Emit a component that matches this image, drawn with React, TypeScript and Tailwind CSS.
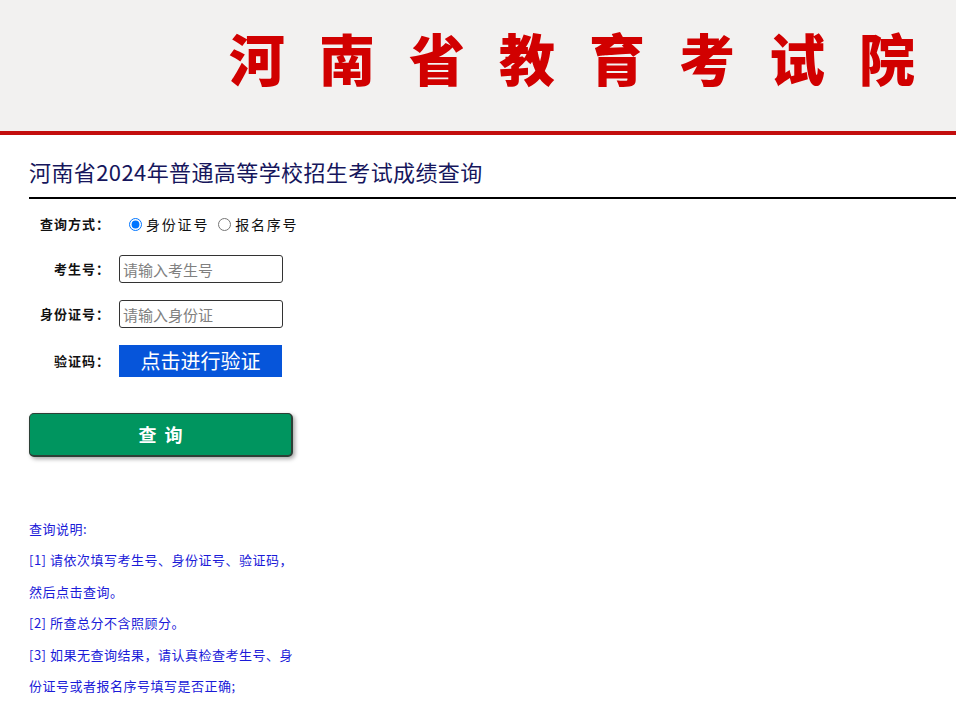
import React from "react";

const cjk = { fontFamily: '"Noto Sans CJK SC", "Liberation Sans", sans-serif' };

const notes = [
  "查询说明:",
  "[1] 请依次填写考生号、身份证号、验证码，",
  "然后点击查询。",
  "[2] 所查总分不含照顾分。",
  "[3] 如果无查询结果，请认真检查考生号、身",
  "份证号或者报名序号填写是否正确;",
];

function Label({ children }: { children: React.ReactNode }) {
  return (
    <div className="w-[84px] shrink-0 text-right text-[13px] font-bold tracking-[1px] text-[#111]">
      {children}
    </div>
  );
}

export default function App() {
  return (
    <div className="min-h-[716px] bg-white" style={cjk}>
      {/* banner */}
      <div className="h-[131px] bg-[#f2f1f0] pl-[229px] pt-[29px]">
        <div className="text-[56px] leading-[56px] font-black tracking-[34px] text-[#d10000] whitespace-nowrap">
          河南省教育考试院
        </div>
      </div>
      <div className="h-[4px] bg-[#c30d0d]" />

      {/* title */}
      <div className="pl-[29px] pt-[21px]">
        <h1 className="text-[22px] leading-[30px] tracking-[0.4px] text-[#16165c] whitespace-nowrap">
          河南省2024年普通高等学校招生考试成绩查询
        </h1>
      </div>
      <div className="ml-[29px] mt-[11px] h-[2px] bg-black" />

      {/* form */}
      <div className="pl-[26px] pt-[12px]">
        <div className="flex items-center h-[26px] gap-[9px]">
          <Label>查询方式：</Label>
          <div className="flex items-center text-[14px] tracking-[1.8px] text-[#111] pl-[10px]">
            <input type="radio" name="mode" defaultChecked className="m-0 mr-[4px] h-[13px] w-[13px]" />
            <span>身份证号</span>
            <input type="radio" name="mode" className="m-0 ml-[9px] mr-[4px] h-[13px] w-[13px]" />
            <span>报名序号</span>
          </div>
        </div>

        <div className="flex items-center mt-[18px] gap-[9px]">
          <Label>考生号：</Label>
          <input
            placeholder="请输入考生号"
            className="w-[164px] h-[28px] border border-[#333] rounded-[3px] pl-[3px] text-[15px] placeholder:text-[#808080] outline-none"
          />
        </div>

        <div className="flex items-center mt-[17px] gap-[9px]">
          <Label>身份证号：</Label>
          <input
            placeholder="请输入身份证"
            className="w-[164px] h-[28px] border border-[#333] rounded-[3px] pl-[3px] text-[15px] placeholder:text-[#808080] outline-none"
          />
        </div>

        <div className="flex items-center mt-[17px] gap-[9px]">
          <Label>验证码：</Label>
          <button className="w-[163px] h-[32px] bg-[#0655da] text-white text-[20px] leading-[32px]">
            点击进行验证
          </button>
        </div>
      </div>

      <div className="pl-[29px] mt-[36px]">
        <button className="w-[264px] h-[44px] bg-[#00955f] rounded-[5px] border border-[#2d3f36] border-b-2 border-r-2 shadow-[2px_2px_4px_rgba(0,0,0,0.35)] text-white text-[18px] font-bold tracking-[8px] pl-[8px]">
          查询
        </button>
      </div>

      {/* notes */}
      <div className="pl-[29px] mt-[56px] pb-[10px] text-[13px] leading-[31.4px] tracking-[0.5px] text-[#1a1ad8]">
        {notes.map((n, i) => (
          <div key={i} className="whitespace-nowrap">
            {n}
          </div>
        ))}
      </div>
    </div>
  );
}
